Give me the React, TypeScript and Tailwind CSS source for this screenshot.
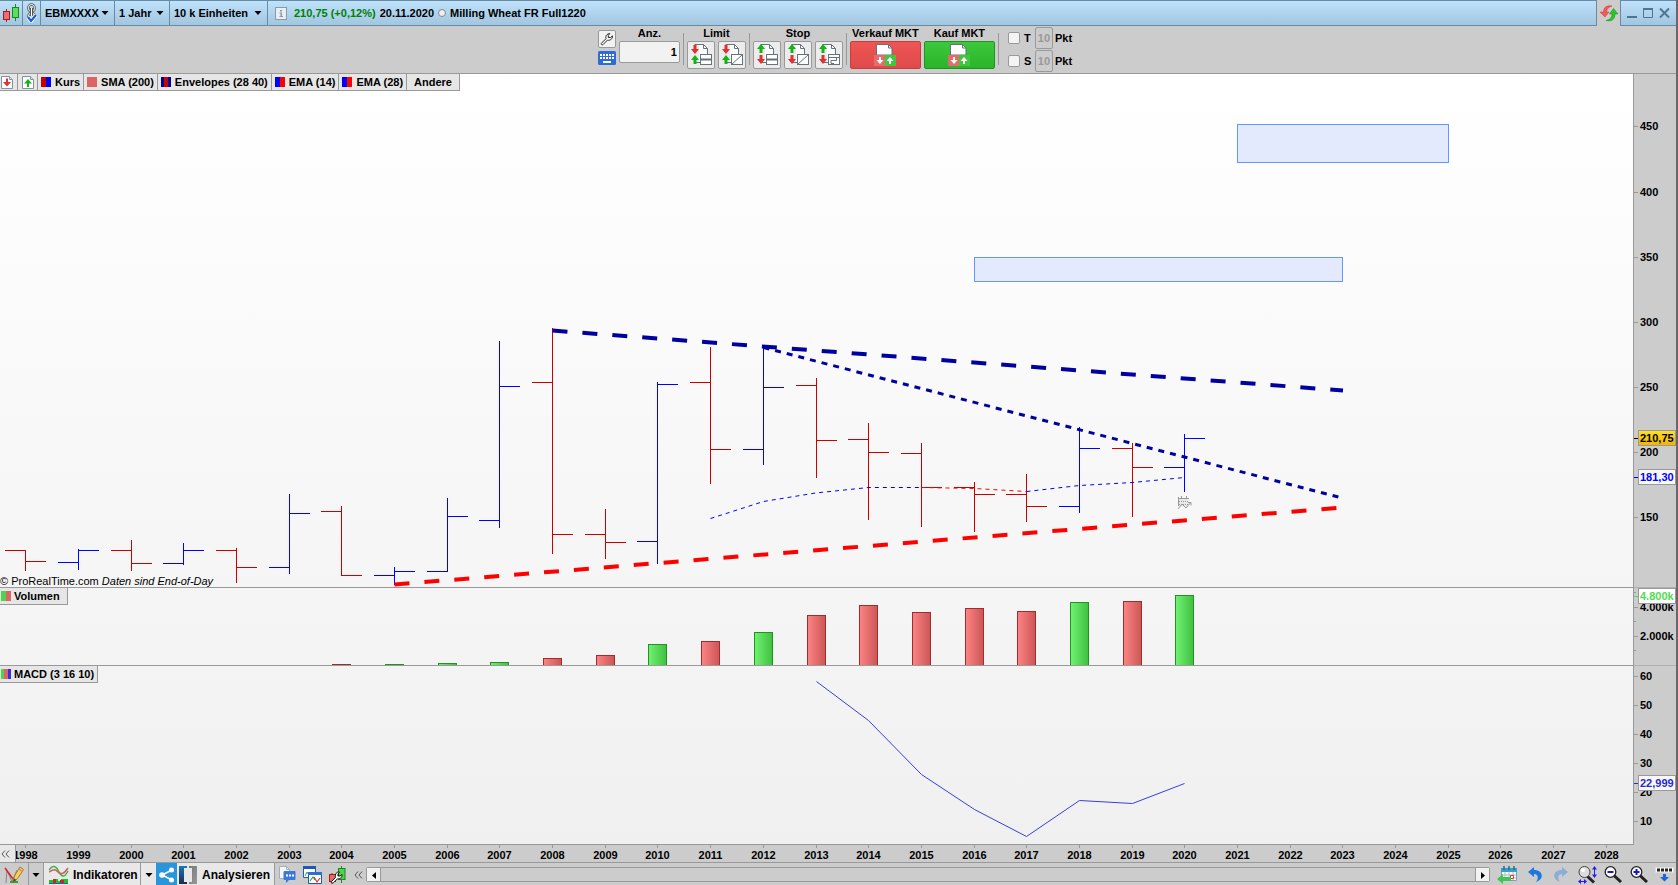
import { ReactNode } from "react";

type Bar = {
  year: number;
  open: number;
  high: number;
  low: number;
  close: number;
};

// plot width the chart coordinates are drawn for
const PLOT_W = 1633;

const yearX = (year: number) =>
  25.5 + Math.round((year - 1998) * 52.68 + 0.3);

const years = Array.from({ length: 31 }, (_, i) => 1998 + i);

// values are y positions inside the price panel
const bars: Bar[] = [
  { year: 1998, open: 476.5, high: 476, low: 497, close: 487.5 },
  { year: 1999, open: 488.5, high: 475, low: 496, close: 476.5 },
  { year: 2000, open: 476.5, high: 466, low: 497, close: 489.5 },
  { year: 2001, open: 489.5, high: 469, low: 491, close: 476.5 },
  { year: 2002, open: 476.5, high: 474, low: 509, close: 493.5 },
  { year: 2003, open: 493.5, high: 420, low: 500, close: 439.5 },
  { year: 2004, open: 437.5, high: 432, low: 502, close: 501.5 },
  { year: 2005, open: 501.5, high: 493, low: 511, close: 497.5 },
  { year: 2006, open: 497.5, high: 424, low: 498, close: 442.5 },
  { year: 2007, open: 446.5, high: 267, low: 454, close: 312.5 },
  { year: 2008, open: 308.5, high: 254, low: 480, close: 460.5 },
  { year: 2009, open: 460.5, high: 435, low: 485, close: 468.5 },
  { year: 2010, open: 467.5, high: 308, low: 490, close: 310.5 },
  { year: 2011, open: 308.5, high: 273, low: 410, close: 375.5 },
  { year: 2012, open: 375.5, high: 271, low: 391, close: 313.5 },
  { year: 2013, open: 311.5, high: 304, low: 404, close: 366.5 },
  { year: 2014, open: 365.5, high: 349, low: 446, close: 378.5 },
  { year: 2015, open: 379.5, high: 369, low: 453, close: 413.5 },
  { year: 2016, open: 413.5, high: 408, low: 458, close: 420.5 },
  { year: 2017, open: 420.5, high: 400, low: 448, close: 432.5 },
  { year: 2018, open: 432.5, high: 353, low: 439, close: 374.5 },
  { year: 2019, open: 374.5, high: 369, low: 443, close: 393.5 },
  { year: 2020, open: 393.5, high: 360, low: 418, close: 364.5 },
];

const volumes = [
  { year: 2004, top: 76.5, up: false },
  { year: 2005, top: 76.5, up: true },
  { year: 2006, top: 75.5, up: true },
  { year: 2007, top: 74.5, up: true },
  { year: 2008, top: 70.5, up: false },
  { year: 2009, top: 67.5, up: false },
  { year: 2010, top: 56.5, up: true },
  { year: 2011, top: 53.5, up: false },
  { year: 2012, top: 44.5, up: true },
  { year: 2013, top: 27.5, up: false },
  { year: 2014, top: 17.5, up: false },
  { year: 2015, top: 24.5, up: false },
  { year: 2016, top: 20.5, up: false },
  { year: 2017, top: 23.5, up: false },
  { year: 2018, top: 14.5, up: true },
  { year: 2019, top: 13.5, up: false },
  { year: 2020, top: 7.5, up: true },
];

const macd = [15.5, 54.5, 108.5, 143.5, 170.5, 134.5, 137.5, 117.5];
const macdPoints = macd.map((y, i) => `${yearX(2013 + i)},${y}`).join(" ");

const priceTicks = [450, 400, 350, 300, 250, 200, 150];
const macdTicks = [60, 50, 40, 30, 20, 10];

const legend = [
  { label: "Kurs", colors: ["bg-[#c80000]", "bg-[#0000ff]"] },
  { label: "SMA (200)", colors: ["bg-[#dc6464]"] },
  {
    label: "Envelopes (28 40)",
    colors: ["bg-[#000096]", "bg-[#c80000]", "bg-[#000096]"],
  },
  { label: "EMA (14)", colors: ["bg-[#0000ff]", "bg-[#ff0000]"] },
  { label: "EMA (28)", colors: ["bg-[#0000ff]", "bg-[#ff0000]"] },
];

const Caret = () => (
  <svg className="pointer-events-none h-1 w-2 shrink-0" viewBox="0 0 8 4">
    <path d="M0.5 0h7L4 4z" fill="#000" />
  </svg>
);

const Swatch = ({ colors }: { colors: string[] }) => (
  <span className="flex h-[10px] w-[10px] shrink-0">
    {colors.map((c, i) => (
      <span key={i} className={`flex-1 ${c}`} />
    ))}
  </span>
);

const CandlesIcon = () => (
  <svg width="18" height="20" viewBox="0 0 18 20">
    <path d="M4.500 6v13" stroke="#b01818" />
    <rect x="1.500" y="8.500" width="6" height="8" fill="#e87070" stroke="#b01818" />
    <path d="M13.500 1v17" stroke="#178a17" />
    <rect x="10.500" y="4.500" width="6" height="10" fill="#5fdd5f" stroke="#178a17" />
  </svg>
);

const LinkIcon = () => (
  <svg width="12" height="20" viewBox="0 0 12 20" fill="none">
    <rect x="2.500" y="1.500" width="6" height="7" rx="3" stroke="#555" strokeWidth="2.500" />
    <rect x="2.500" y="1.500" width="6" height="7" rx="3" stroke="#fff" />
    <rect x="2.500" y="10" width="6" height="7" rx="3" stroke="#555" strokeWidth="2.500" />
    <rect x="2.500" y="10" width="6" height="7" rx="3" stroke="#fff" />
    <path d="M5.500 5v8" stroke="#555" strokeWidth="3" />
    <path d="M5.500 5v8" stroke="#fff" />
    <path d="M2 14l3 4 5-6" stroke="#fff" strokeWidth="4" />
    <path d="M2 14l3 4 5-6" stroke="#1a5fd0" strokeWidth="2.200" />
  </svg>
);

const RefreshIcon = () => (
  <svg width="18" height="17" viewBox="0 0 18 17">
    <path d="M12 1C6 0 3.500 3 3.500 7H0l5 5 4-5H6.500c0-3 2-5 5.500-6z" fill="#f05a5a" stroke="#d03030" strokeWidth="0.500" />
    <path d="M6 15.500c6 1.500 9-1.500 9-6.500h3l-4.500-5.500L9.500 9h2.500c0 3.500-2 5.500-6 6.500z" fill="#28c828" stroke="#0f9010" strokeWidth="0.500" />
  </svg>
);

const WrenchIcon = () => (
  <svg width="14" height="14" viewBox="0 0 14 14">
    <path
      d="M1.500 11.200L6 6.700C5.200 4 7 1.500 9.800 1.600L8.300 3.300v2.200h2.300l1.800-1.600c.3 2.900-2.100 4.900-4.900 4.200L3 12.600c-1 .8-2.400-.5-1.500-1.400z"
      fill="#fff"
      stroke="#222"
    />
  </svg>
);

const KeyboardIcon = () => (
  <svg width="18" height="14" viewBox="0 0 18 14">
    <rect width="18" height="14" rx="1.500" fill="#2f6bd6" />
    <path d="M2 4h14M2 7h14" stroke="#fff" strokeWidth="2" strokeDasharray="2 1" />
    <path d="M5 11h8" stroke="#fff" strokeWidth="2" />
  </svg>
);

// document with two arrows and a small symbol in the lower right corner
const OrderIcon = ({ stop, kind }: { stop?: boolean; kind: string }) => (
  <svg width="26" height="26" viewBox="1 1 26 26">
    <path d="M7.500 3.500h9l4 4v14h-13z" fill="#fff" stroke="#64737d" />
    <path d="M16.500 3.500v4h4" fill="none" stroke="#64737d" />
    <path d="M3 3h9v20H3z" fill="#ececec" />
    <path d="M7.500 3.500H13M7.500 21.500H13" stroke="#64737d" />
    <path d="M12 4h2v17h-2z" fill="#fff" />
    {stop ? (
      <>
        <path d="M6.500 12V8H4l4-5 4 5H9.500v4z" fill="#14b414" />
        <path d="M6.500 14v4H4l4 5 4-5H9.500v-4z" fill="#e03030" />
      </>
    ) : (
      <>
        <path d="M6.500 4v4H4l4 5 4-5H9.500V4z" fill="#e03030" />
        <path d="M6.500 23v-4H4l4-5 4 5H9.500v4z" fill="#14b414" />
      </>
    )}
    <rect x="13.500" y="13.500" width="11" height="10" fill="#fff" stroke="#64737d" />
    {kind === "line" && <path d="M13 18.500h12" stroke="#64737d" strokeWidth="2" />}
    {kind === "slash" && <path d="M13.500 23.500l11-10" stroke="#64737d" />}
    {kind === "step" && (
      <path d="M13.500 16.500h11M16 22.500v-3h5.500v-3M16 22.500h3" fill="none" stroke="#64737d" />
    )}
  </svg>
);

const MarketIcon = () => (
  <svg width="22" height="22" viewBox="0 0 22 22">
    <path d="M2.500 11V.5h12l3.500 3.500v7z" fill="#fff" stroke="#64737d" />
    <path d="M14.500.5V4H18" fill="none" stroke="#64737d" />
    <path d="M0 11h11v11H0z" fill="#e86a6a" />
    <path d="M11 11h11v11H11z" fill="#3ec83e" />
    <path d="M5 13h2v3h2.500L6 20l-3.500-4H5z" fill="#fff" />
    <path d="M15 20h2v-3h2.500L16 13l-3.500 4H15z" fill="#fff" />
  </svg>
);

const PageArrow = ({ up }: { up?: boolean }) => (
  <svg width="12" height="13" viewBox="0 0 12 13">
    <path d="M.5.5h8l3 3v9H.5z" fill="#fff" stroke="#7f95a5" />
    <path d="M8.500.5v3h3" fill="#cfe0ec" stroke="#7f95a5" />
    {up ? (
      <path d="M5 11V7.500H2L6 3l4 4.500H7V11z" fill="#14b414" />
    ) : (
      <path d="M5 2.500V6H2l4 4.500L10 6H7V2.500z" fill="#e03030" />
    )}
  </svg>
);

const PencilIcon = () => (
  <svg width="20" height="18" viewBox="0 0 20 18" fill="none">
    <path d="M2 17L3 4l5 12 5-12" stroke="#7d8790" />
    <path d="M6 16h8" stroke="#28a828" strokeWidth="2" />
    <path d="M1 2l8 11" stroke="#e02020" strokeWidth="1.500" />
    <path d="M9 16l1.500-6L16 1l3.500 2.500-6 9z" fill="#f7d25a" stroke="#a87818" />
    <path d="M14.800 3l3.600 2.300" stroke="#e08a8a" strokeWidth="1.500" />
    <path d="M9 16l1-3.500 2.500 1.500z" fill="#444" />
  </svg>
);

const IndicatorIcon = () => (
  <svg width="20" height="19" viewBox="0 0 20 19" fill="none">
    <path d="M0 5c4-6 7-4 10 2s6 5 9-1" stroke="#38b050" strokeWidth="1.500" />
    <path d="M0 7c5-3 6-3 9 0s6 2 10-4" stroke="#c86060" strokeWidth="1.500" />
    <path d="M0 19v-4h5v-1h4v2h3v-2h7v5z" fill="#12c812" />
    <path d="M4 14h3v4H4zM11 15h4v3h-4z" fill="#d82020" />
    <path d="M0 18.500h19" stroke="#1a60d0" />
  </svg>
);

const ShareIcon = () => (
  <svg width="16" height="16" viewBox="0 0 16 16">
    <path d="M13 3L3 8l10 5" fill="none" stroke="#fff" strokeWidth="1.500" />
    <circle cx="3" cy="8" r="2.800" fill="#fff" />
    <circle cx="12.500" cy="3" r="2.500" fill="#fff" />
    <circle cx="12.500" cy="13" r="2.500" fill="#fff" />
  </svg>
);

const BracketsIcon = () => (
  <svg width="18" height="18" viewBox="0 0 18 18">
    <defs>
      <linearGradient id="bracketBlue" x1="0" y1="0" x2="0" y2="1">
        <stop offset="0" stopColor="#1a78b8" />
        <stop offset="1" stopColor="#1c2c50" />
      </linearGradient>
      <linearGradient id="bracketGray" x1="0" y1="0" x2="1" y2="1">
        <stop offset="0" stopColor="#777" />
        <stop offset="1" stopColor="#999" />
      </linearGradient>
    </defs>
    <path d="M0 0h8v2H5v14h3v2H0z" fill="url(#bracketBlue)" />
    <path d="M18 0h-8v2h3v14h-3v2h8z" fill="url(#bracketGray)" />
  </svg>
);

const ChatIcon = () => (
  <svg width="17" height="17" viewBox="0 0 17 17">
    <path d="M.5.5h7l3 3v9H.5z" fill="#f4f8fb" stroke="#9fb0bd" />
    <path d="M7.500.5v3h3" fill="none" stroke="#9fb0bd" />
    <path d="M6 5h9.500q1 0 1 1v7q0 1-1 1H10l-3 3v-3H6q-1.500 0-1.500-1V6q0-1 1.500-1z" fill="#3a78dc" />
    <path d="M7 9.500h8" stroke="#fff" strokeWidth="2" strokeDasharray="2 1" />
  </svg>
);

const WindowsIcon = () => (
  <svg width="19" height="18" viewBox="0 0 19 18" fill="none">
    <path d="M.5.5h12v11H.5z" fill="#fff" stroke="#2058b8" />
    <path d="M0 1.500h13" stroke="#2058b8" strokeWidth="3" />
    <path d="M2 10l2-4 2 3" stroke="#28b040" />
    <path d="M6 8l2-2" stroke="#e03030" />
    <path d="M5.500 6.500h13v11h-13z" fill="#fff" stroke="#2058b8" />
    <path d="M5 7.500h14" stroke="#2a70d8" strokeWidth="3" />
    <path d="M7 15l3-4 2 3" stroke="#28b040" strokeWidth="1.200" />
    <path d="M11 11l3 5 3-4" stroke="#e03030" strokeWidth="1.200" />
  </svg>
);

const CandleWrenchIcon = () => (
  <svg width="17" height="18" viewBox="0 0 17 18">
    <path d="M3 7v11" stroke="#b01818" />
    <rect x=".5" y="8.500" width="6" height="7" fill="#e46a6a" stroke="#b01818" />
    <path d="M12.500 0v17" stroke="#178a17" />
    <rect x="9.500" y="2.500" width="6.500" height="11" fill="#4fd24f" stroke="#178a17" />
    <path d="M2.500 15.500l4-4C5.500 8 8 5.500 10.500 6L9 8v2h2l2-1.500c.5 3-2 4.800-4.500 4.200l-4 4c-1.500.8-3-.2-2-1.200z" fill="#fff" stroke="#111" />
  </svg>
);

const CalendarIcon = () => (
  <svg width="21" height="18" viewBox="0 0 21 18">
    <path d="M4.500 2.500h15v12h-15z" fill="#fff" stroke="#7aa0b8" />
    <path d="M4 2h16v4H4z" fill="#3a9fc8" />
    <path d="M7 0v4M12 0v4M17 0v4" stroke="#2a6a90" strokeWidth="1.500" />
    <path d="M5 9h14M5 12h14M8 6v8M12 6v8M16 6v8" stroke="#a8bac6" />
    <path d="M13.500 9.500h3v3h-3z" fill="#fff" stroke="#e03030" />
    <path d="M0 13l6-5v3h8v4H6v3z" fill="#3cc850" />
  </svg>
);

const CurvedArrow = ({ redo }: { redo?: boolean }) => (
  <svg width="16" height="17" viewBox="0 0 16 17">
    {redo ? (
      <path d="M9 1l6 5-6 5V8C5 8 4 12 7 16c-9-3-7-12 2-12z" fill="#8aaed8" />
    ) : (
      <path d="M7 1L1 6l6 5V8c4 0 5 4 2 8 9-3 7-12-2-12z" fill="#1e78e0" />
    )}
  </svg>
);

const Magnifier = ({ sign }: { sign: string }) => (
  <svg width="18" height="17" viewBox="0 0 18 17" fill="none">
    <path d="M10 9.500l7 6.500" stroke="#222" strokeWidth="3" />
    <circle cx="6.500" cy="6" r="5.300" fill="#fff" stroke="#222" strokeWidth="1.300" />
    <path d="M3.500 6h6" stroke="#1414e0" strokeWidth="2" />
    {sign === "plus" && <path d="M6.500 3v6" stroke="#1414e0" strokeWidth="2" />}
  </svg>
);

const ZoomFitIcon = () => (
  <svg width="19" height="18" viewBox="0 0 19 18" fill="none">
    <path d="M9 10l7 6.500" stroke="#222" strokeWidth="3" />
    <circle cx="6.500" cy="6" r="5.500" fill="#dcdcdc" stroke="#444" />
    <circle cx="5" cy="4" r="2" fill="#fff" />
    <path d="M16.500 2v8M1 15.500h7" stroke="#2020f0" />
    <path d="M14 3.500L16.500 0 19 3.500zM14 8.500l2.500 3.500L19 8.500zM3 13v5l-3-2.500zM6 13v5l3-2.500z" fill="#2020f0" />
  </svg>
);

const DetachIcon = () => (
  <svg width="19" height="15" viewBox="0 0 19 15">
    <path d="M.5.5h18v5H.5z" fill="#fff" stroke="#ddd" />
    <path d="M2 3h15" stroke="#222" strokeWidth="3" strokeDasharray="3 1" />
    <path d="M8 7h3v3h3l-4.500 4.500L5 10h3z" fill="#1a64d8" />
  </svg>
);

const Separator = () => <span className="mt-[7px] h-8 w-px bg-[#999]" />;

const OrderButton = ({ label, children }: { label: string; children: ReactNode }) => (
  <button
    type="button"
    aria-label={label}
    className="flex h-7 w-7 items-center justify-center rounded-xs border border-[#999] bg-[#ececec]"
  >
    {children}
  </button>
);

const TitleSelect = ({ label, value, width }: { label: string; value: string; width: string }) => (
  <label className={`flex items-center justify-between border-r border-[#678ba3] pr-[5px] pl-1 ${width}`}>
    <select aria-label={label} className="appearance-none bg-transparent font-bold outline-none" defaultValue={value}>
      <option>{value}</option>
    </select>
    <Caret />
  </label>
);

const TitleBar = () => (
  <header className="flex h-[26px] items-stretch border-y border-[#678ba3] bg-linear-to-b from-[#bfe2fc] to-[#a2c6e0]">
    <div className="flex w-[23px] items-center justify-center border-r border-[#678ba3]">
      <CandlesIcon />
    </div>
    <div className="flex w-[18px] items-center justify-center border-r border-[#678ba3]">
      <LinkIcon />
    </div>
    <TitleSelect label="Symbol" value="EBMXXXX" width="w-[74px]" />
    <TitleSelect label="Zeiteinheit" value="1 Jahr" width="w-[55px]" />
    <TitleSelect label="Historie" value="10 k Einheiten" width="w-[98px]" />
    <div className="flex flex-1 items-center pl-[7px]">
      <svg width="12" height="13" viewBox="0 0 12 13">
        <rect x=".5" y=".5" width="11" height="12" fill="#e8eef2" stroke="#8a9ba8" />
        <path d="M5 3h2v1.500H5zM4.500 5.500H7V9h1v1H4.500V9H5.500V6.500h-1z" fill="#8a9ba8" />
      </svg>
      <span className="ml-[7px] text-[#008000]">210,75 (+0,12%)</span>
      <span className="ml-1">20.11.2020</span>
      <span className="mx-1 h-2 w-2 rounded-full border border-[#888] bg-[#eee]" />
      <span>Milling Wheat FR Full1220</span>
    </div>
    <div className="-my-px flex w-[25px] items-center justify-center border-x border-[#678ba3] bg-[#cccccc]">
      <RefreshIcon />
    </div>
    <div className="flex w-[55px] items-center justify-center gap-[6px] text-[#4f7690]">
      <button type="button" aria-label="Minimieren">
        <svg width="10" height="12" viewBox="0 0 10 12">
          <path d="M0 10h10" stroke="currentColor" strokeWidth="2" />
        </svg>
      </button>
      <button type="button" aria-label="Maximieren">
        <svg width="10" height="12" viewBox="0 0 10 12">
          <path d="M.5 1.500h9v9h-9z" fill="none" stroke="currentColor" />
          <path d="M0 2h10" stroke="currentColor" strokeWidth="2" />
        </svg>
      </button>
      <button type="button" aria-label="Schließen">
        <svg width="11" height="12" viewBox="0 0 11 12">
          <path d="M1 1.500l9 9M10 1.500l-9 9" stroke="currentColor" strokeWidth="2" />
        </svg>
      </button>
    </div>
  </header>
);

const StopRow = ({ label }: { label: string }) => (
  <div className="flex items-center">
    <label className="flex w-[27px] items-center gap-1">
      <input
        type="checkbox"
        className="h-3 w-3 appearance-none rounded-xs border border-[#999] bg-[#f4f4f4]"
      />
      {label}
    </label>
    <input
      aria-label={`${label} Pkt`}
      defaultValue="10"
      disabled
      className="h-[22px] w-[18px] rounded-xs border border-[#999] bg-[#cccccc] text-center font-bold text-[#999]"
    />
    <span className="ml-[2px]">Pkt</span>
  </div>
);

const TradingBar = () => (
  <section className="flex h-[48px] justify-center gap-[3px] border-b border-[#999] pr-[6px]">
    <div className="flex flex-col gap-[3px] pt-1">
      <button
        type="button"
        aria-label="Einstellungen"
        className="flex h-[18px] w-[18px] items-center justify-center rounded-xs border border-[#999] bg-[#f2f2f2]"
      >
        <WrenchIcon />
      </button>
      <button type="button" aria-label="Tastatur">
        <KeyboardIcon />
      </button>
    </div>
    <label className="flex w-[61px] flex-col">
      <span className="h-[15px] text-center leading-[15px]">Anz.</span>
      <input
        defaultValue="1"
        className="h-[22px] rounded-xs border border-[#999] bg-[#f2f2f2] pr-[2px] text-right font-bold"
      />
    </label>
    <Separator />
    <div>
      <div className="h-[15px] text-center leading-[15px]">Limit</div>
      <div className="flex gap-[3px]">
        <OrderButton label="Limit">
          <OrderIcon kind="line" />
        </OrderButton>
        <OrderButton label="Limit an Linie">
          <OrderIcon kind="slash" />
        </OrderButton>
      </div>
    </div>
    <Separator />
    <div>
      <div className="h-[15px] text-center leading-[15px]">Stop</div>
      <div className="flex gap-[3px]">
        <OrderButton label="Stop">
          <OrderIcon stop kind="line" />
        </OrderButton>
        <OrderButton label="Stop an Linie">
          <OrderIcon stop kind="slash" />
        </OrderButton>
        <OrderButton label="Trailing Stop">
          <OrderIcon stop kind="step" />
        </OrderButton>
      </div>
    </div>
    <Separator />
    <div className="w-[71px]">
      <div className="h-[15px] text-center leading-[15px] whitespace-nowrap">Verkauf MKT</div>
      <button
        type="button"
        aria-label="Verkauf MKT"
        className="flex h-7 w-full items-center justify-center rounded-xs border border-[#c83c3c] bg-linear-to-b from-[#f05555] to-[#de4a4a]"
      >
        <MarketIcon />
      </button>
    </div>
    <div className="w-[71px]">
      <div className="h-[15px] text-center leading-[15px] whitespace-nowrap">Kauf MKT</div>
      <button
        type="button"
        aria-label="Kauf MKT"
        className="flex h-7 w-full items-center justify-center rounded-xs border border-[#1e961e] bg-linear-to-b from-[#3cc83c] to-[#2ab42a]"
      >
        <MarketIcon />
      </button>
    </div>
    <Separator />
    <div className="ml-[6px] flex flex-col gap-px pt-px">
      <StopRow label="T" />
      <StopRow label="S" />
    </div>
  </section>
);

const PriceChart = () => (
  <svg
    className="block h-[513px] w-full"
    viewBox={`0 0 ${PLOT_W} 513`}
    preserveAspectRatio="none"
    fill="none"
  >
    <rect x="1237.500" y="50.500" width="211" height="38" fill="#e4eafe" stroke="#6496ff" />
    <rect x="974.500" y="183.500" width="368" height="24" fill="#e4eafe" stroke="#6496ff" />
    {bars.map((b) => {
      const x = yearX(b.year);
      return (
        <path
          key={b.year}
          d={`M${x - 20.5} ${b.open}H${x}M${x} ${b.high}V${b.low}M${x} ${b.close}H${x + 20.5}`}
          stroke={b.close < b.open ? "#0000ff" : "#c80000"}
        />
      );
    })}
    <g strokeDasharray="4 4">
      <path d="M710.500 444.500L763.500 427.500 815.500 419 868.500 413.500H921.500" stroke="#0000ff" />
      <path d="M921.500 413.500L974.500 414.500 1026.500 417.500" stroke="#ff0000" />
      <path d="M1026.500 417.500L1079.500 411.500 1132.500 408.500 1184.500 403.500" stroke="#0000ff" />
    </g>
    <path d="M552.500 256.500L1343 316.500" stroke="#0000a0" strokeWidth="4" strokeDasharray="15 15" />
    <path d="M763.500 273.500L1340 423.500" stroke="#0000a0" strokeWidth="3" strokeDasharray="6 6" />
    <path d="M394.500 510.500L1343 433.500" stroke="#ff0000" strokeWidth="4" strokeDasharray="15 15" />
    {/* calendar marker under the last bar */}
    <g stroke="#999">
      <path d="M1178.500 424.500h10v8h-10z" fill="#e8e8e8" stroke="none" />
      <path d="M1178.500 423v9M1178 424.500h11M1181.500 422v3M1186.500 422v3" />
      <path d="M1179 427.500h9M1179 430.500h9" strokeDasharray="1 1" />
      <path d="M1178 435l4-5 4 4 5-6M1188 428.500h3v3" />
    </g>
  </svg>
);

const VolumeChart = () => (
  <svg className="block h-[77px] w-full" viewBox={`0 0 ${PLOT_W} 77`} preserveAspectRatio="none">
    <defs>
      <linearGradient id="volUp">
        <stop offset="0" stopColor="#72f272" />
        <stop offset="1" stopColor="#40c040" />
      </linearGradient>
      <linearGradient id="volDown">
        <stop offset="0" stopColor="#fc8484" />
        <stop offset="1" stopColor="#cc5555" />
      </linearGradient>
    </defs>
    {volumes.map((v) => (
      <rect
        key={v.year}
        x={yearX(v.year) - 9}
        y={v.top}
        width="18"
        height={80 - v.top}
        fill={v.up ? "url(#volUp)" : "url(#volDown)"}
        stroke={v.up ? "#1e961e" : "#a02c2c"}
      />
    ))}
  </svg>
);

const MacdChart = () => (
  <svg className="block h-[178px] w-full" viewBox={`0 0 ${PLOT_W} 178`} preserveAspectRatio="none">
    <polyline points={macdPoints} fill="none" stroke="#3c3ce0" />
  </svg>
);

const Tick = ({ y, label }: { y: number; label: string | number }) => (
  <>
    <path d={`M0 ${y}h4`} stroke="#999" />
    <text x="6" y={y + 3.5}>
      {label}
    </text>
  </>
);

const AxisTag = ({ y, label, fill, color }: { y: number; label: string; fill: string; color: string }) => (
  <>
    <path d={`M0 ${y}h4`} stroke={color} />
    <rect x="4.500" y={y - 8} width="37" height="15" fill={fill} stroke="#999" />
    <text x="6" y={y + 3.5} fill={color}>
      {label}
    </text>
  </>
);

const axisText = "block w-full font-['Liberation_Sans',sans-serif] text-[11px] font-bold";

const PriceAxis = () => (
  <svg className={`h-[513px] ${axisText}`}>
    <defs>
      <linearGradient id="lastPrice" x1="0" y1="0" x2="0" y2="1">
        <stop offset="0" stopColor="#ffe028" />
        <stop offset="1" stopColor="#f0b400" />
      </linearGradient>
    </defs>
    {priceTicks.map((p, i) => (
      <Tick key={p} y={Math.round(52.4 + i * 65.15) + 0.5} label={p} />
    ))}
    <AxisTag y={364.5} label="210,75" fill="url(#lastPrice)" color="#000" />
    <AxisTag y={403.5} label="181,30" fill="#f8f8f8" color="#0000ff" />
  </svg>
);

const VolumeAxis = () => (
  <svg className={`h-[77px] ${axisText}`}>
    <Tick y={19.5} label="4.000k" />
    <Tick y={48.5} label="2.000k" />
    <path d="M0 4.500h2M0 33.500h2M0 62.500h2" stroke="#999" />
    <AxisTag y={8.5} label="4.800k" fill="#fff" color="#50dc50" />
  </svg>
);

const MacdAxis = () => (
  <svg className={`h-[178px] ${axisText}`}>
    {macdTicks.map((t, i) => (
      <Tick key={t} y={10.5 + i * 29} label={t} />
    ))}
    <AxisTag y={117.5} label="22,999" fill="#f8f8f8" color="#2828dc" />
  </svg>
);

const PanelTag = ({ label, colors, width }: { label: string; colors: string[]; width: string }) => (
  <div
    className={`absolute top-0 left-0 flex h-[17px] items-center gap-[3px] border-r border-b border-[#999] bg-[#e6e6e6] pl-px whitespace-nowrap ${width}`}
  >
    <Swatch colors={colors} />
    {label}
  </div>
);

const Charts = () => (
  <main className="flex">
    <div className="min-w-0 flex-1 border-r border-[#999] bg-linear-to-b from-white to-[#f0f0f0]">
      <div className="relative border-b border-[#999]">
        <PriceChart />
        <div className="absolute top-0 left-0 flex h-[17px] border-b border-[#999] bg-[#e6e6e6]">
          <button type="button" aria-label="Verkaufen" className="flex w-[18px] items-center border-r border-[#999] pl-px">
            <PageArrow />
          </button>
          <button type="button" aria-label="Kaufen" className="flex w-5 items-center justify-center border-r border-[#999]">
            <PageArrow up />
          </button>
          {legend.map((item) => (
            <button
              key={item.label}
              type="button"
              className="flex items-center gap-1 border-r border-[#999] px-[3px] font-bold whitespace-nowrap"
            >
              <Swatch colors={item.colors} />
              {item.label}
            </button>
          ))}
          <button type="button" className="border-r border-[#999] px-[7px] font-bold">
            Andere
          </button>
        </div>
        <p className="absolute bottom-0 left-0 leading-3 font-normal">
          © ProRealTime.com <em>Daten sind End-of-Day</em>
        </p>
      </div>
      <div className="relative border-b border-[#999]">
        <VolumeChart />
        <PanelTag label="Volumen" width="w-[68px]" colors={["bg-[#50d250]", "bg-[#dc6464]"]} />
      </div>
      <div className="relative border-b border-[#999]">
        <MacdChart />
        <PanelTag
          label="MACD (3 16 10)"
          width="w-[98px]"
          colors={["bg-[#50d250]", "bg-[#dc6464]", "bg-[#3232dc]"]}
        />
      </div>
    </div>
    <div className="w-[42px]">
      <div className="border-b border-[#b0b0b0]">
        <PriceAxis />
      </div>
      <div className="border-b border-[#b0b0b0]">
        <VolumeAxis />
      </div>
      <MacdAxis />
    </div>
  </main>
);

const DoubleChevron = () => (
  <svg width="9" height="8" viewBox="0 0 9 8">
    <path d="M4 .5L1 4l3 3.500M8 .5L5 4l3 3.500" fill="none" stroke="#555" />
  </svg>
);

const YearAxis = () => (
  <div className="relative border-b border-[#999] pr-[43px]">
    <svg className={`h-[17px] overflow-visible ${axisText}`}>
      {years.map((y) => {
        const x = `${(yearX(y) / PLOT_W) * 100}%`;
        return (
          <g key={y}>
            <line x1={x} x2={x} y1="0" y2="3" stroke="#999" />
            <text x={x} y="14" textAnchor="middle">
              {y}
            </text>
          </g>
        );
      })}
    </svg>
    <button
      type="button"
      aria-label="Zurück"
      className="absolute top-0 left-0 flex h-[17px] w-4 items-center border-r border-[#999] bg-[#e8e8e8] pl-px"
    >
      <DoubleChevron />
    </button>
  </div>
);

const ToolButton = ({ label, className, children }: { label: string; className: string; children: ReactNode }) => (
  <button type="button" aria-label={label} className={`flex shrink-0 items-center justify-center pt-px ${className}`}>
    {children}
  </button>
);

const BottomBar = () => (
  <footer className="flex h-[22px] items-stretch overflow-hidden">
    <ToolButton label="Zeichnen" className="w-[29px] border-r border-[#999]">
      <PencilIcon />
    </ToolButton>
    <ToolButton label="Zeichenwerkzeuge" className="w-[15px] border-r border-[#999]">
      <Caret />
    </ToolButton>
    <button type="button" className="flex w-[97px] items-center gap-1 border-r border-[#999] bg-[#e8e8e8] pt-px pl-[5px] text-xs font-bold">
      <IndicatorIcon />
      Indikatoren
    </button>
    <ToolButton label="Indikatorliste" className="w-[15px] bg-[#e8e8e8]">
      <Caret />
    </ToolButton>
    <ToolButton label="Teilen" className="w-[21px] bg-[#2896dc]">
      <ShareIcon />
    </ToolButton>
    <button type="button" className="flex w-[98px] items-center gap-[5px] border-r border-[#999] bg-[#e8e8e8] pt-px pl-[2px] text-xs font-bold">
      <BracketsIcon />
      Analysieren
    </button>
    <ToolButton label="Chat" className="w-[25px]">
      <ChatIcon />
    </ToolButton>
    <ToolButton label="Fenster" className="w-[25px]">
      <WindowsIcon />
    </ToolButton>
    <ToolButton label="Handel" className="w-[25px]">
      <CandleWrenchIcon />
    </ToolButton>
    <ToolButton label="Einklappen" className="w-4">
      <DoubleChevron />
    </ToolButton>
    <div className="mt-1 mb-[3px] flex flex-1 rounded-xs border border-[#999]">
      <ToolButton label="Nach links" className="w-[14px] border-r border-[#999] bg-[#f2f2f2]">
        <svg width="4" height="7" viewBox="0 0 4 7">
          <path d="M4 0v7L0 3.500z" />
        </svg>
      </ToolButton>
      <div className="flex-1" />
      <ToolButton label="Nach rechts" className="w-[14px] border-l border-[#999] bg-[#f2f2f2]">
        <svg width="4" height="7" viewBox="0 0 4 7">
          <path d="M0 0v7l4-3.500z" />
        </svg>
      </ToolButton>
    </div>
    <ToolButton label="Datum" className="ml-[2px] w-[30px]">
      <CalendarIcon />
    </ToolButton>
    <ToolButton label="Rückgängig" className="w-[26px]">
      <CurvedArrow />
    </ToolButton>
    <ToolButton label="Wiederholen" className="w-[26px]">
      <CurvedArrow redo />
    </ToolButton>
    <ToolButton label="Anpassen" className="w-[26px]">
      <ZoomFitIcon />
    </ToolButton>
    <ToolButton label="Verkleinern" className="w-[26px]">
      <Magnifier sign="minus" />
    </ToolButton>
    <ToolButton label="Vergrößern" className="w-[26px]">
      <Magnifier sign="plus" />
    </ToolButton>
    <ToolButton label="Leiste" className="w-6">
      <DetachIcon />
    </ToolButton>
  </footer>
);

export default function App() {
  return (
    <div className="min-h-screen border-r-2 border-[#686868] bg-[#cccccc] font-['Liberation_Sans',sans-serif] text-[11px] font-bold text-black">
      <TitleBar />
      <TradingBar />
      <Charts />
      <YearAxis />
      <BottomBar />
    </div>
  );
}
